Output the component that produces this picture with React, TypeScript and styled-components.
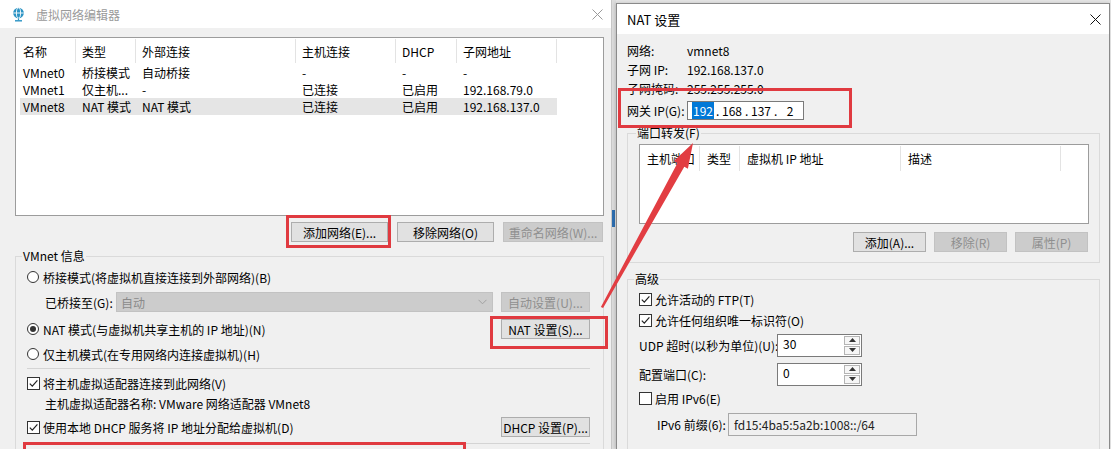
import React from 'react'
import styled, { createGlobalStyle } from 'styled-components'

const GlobalStyle = createGlobalStyle`
	html, body {
		margin: 0;
		padding: 0;
	}
	body {
		background: #e4e4e4;
		font-family: 'Noto Sans CJK SC', 'Microsoft YaHei', sans-serif;
		font-size: 12px;
		color: #000;
	}
`

const Stage = styled.div`
	position: relative;
	width: 1111px;
	height: 449px;
	overflow: hidden;
	display: flex;
	align-items: flex-start;
	background: #e4e4e4;
`

/* ---------- windows ---------- */

const EditorWindow = styled.section`
	box-sizing: border-box;
	width: 612px;
	height: 449px;
	flex: none;
	display: flex;
	flex-direction: column;
	background: #f0f0f0;
	border-right: 1px solid #c6c6c6;
`

const BackStrip = styled.div`
	width: 4px;
	height: 449px;
	flex: none;
	background: #dcdcdc;
	display: flex;
	flex-direction: column;
`

const BackMark = styled.div`
	margin-top: 210px;
	height: 17px;
	width: 3px;
	background: #2d6db0;
`

const NatWindow = styled.section`
	box-sizing: border-box;
	width: 494px;
	height: 446px;
	margin-top: 3px;
	flex: none;
	display: flex;
	flex-direction: column;
	background: #f0f0f0;
	border: 1px solid #8a8a8a;
	border-bottom: none;
	box-shadow: -1px 0 3px rgba(0, 0, 0, 0.15);
`

const TitleBar = styled.header<{ $h: number; $pl: number; $muted?: boolean }>`
	height: ${(p) => p.$h}px;
	flex: none;
	display: flex;
	align-items: center;
	gap: 11px;
	padding: 0 8px 0 ${(p) => p.$pl}px;
	background: #fff;
	color: ${(p) => (p.$muted ? '#9a9a9a' : '#000')};
	font-size: ${(p) => (p.$muted ? 12 : 13)}px;
`

const TitleText = styled.span`
	flex: 1;
	white-space: nowrap;
`

const EditorBody = styled.div`
	flex: 1;
	display: flex;
	flex-direction: column;
	padding: 9px 7px 0 15px;
`

const NatBody = styled.div`
	flex: 1;
	display: flex;
	flex-direction: column;
	padding: 7px 9px 0 10px;
`

/* ---------- list views ---------- */

const ListView = styled.div<{ $h: number; $mt?: number }>`
	box-sizing: border-box;
	height: ${(p) => p.$h}px;
	margin-top: ${(p) => p.$mt ?? 0}px;
	flex: none;
	background: #fff;
	border: 1px solid #9c9c9c;
	overflow: hidden;
`

const HeadRow = styled.div<{ $cols: string; $pl: number; $h: number }>`
	display: grid;
	grid-template-columns: ${(p) => p.$cols};
	padding-left: ${(p) => p.$pl}px;
	height: ${(p) => p.$h}px;
	margin-top: 1px;
	margin-bottom: 1px;
`

const HeadCell = styled.div<{ $pad: number }>`
	display: flex;
	align-items: center;
	padding-left: ${(p) => p.$pad}px;
	border-right: 1px solid #e3e3e3;
	white-space: nowrap;
	overflow: hidden;
`

const DataRow = styled.div<{ $selected?: boolean }>`
	display: grid;
	grid-template-columns: 56px 60px 160px 100px 61px 100px;
	margin-left: 4px;
	width: 537px;
	height: 17px;
	align-items: center;
	background: ${(p) => (p.$selected ? '#e5e5e5' : 'transparent')};
`

const DataCell = styled.div`
	padding-left: 6px;
	white-space: nowrap;
	overflow: hidden;
	&:first-child {
		padding-left: 3px;
	}
`

/* ---------- controls ---------- */

const ButtonBar = styled.div<{ $mt: number; $pr: number; $gap: number }>`
	display: flex;
	justify-content: flex-end;
	gap: ${(p) => p.$gap}px;
	margin-top: ${(p) => p.$mt}px;
	padding-right: ${(p) => p.$pr}px;
`

const PushButton = styled.button<{ $w: number }>`
	box-sizing: border-box;
	width: ${(p) => p.$w}px;
	height: 20px;
	flex: none;
	padding: 0;
	font-family: inherit;
	font-size: 12px;
	color: #000;
	background: #e1e1e1;
	border: 1px solid #adadad;
	border-radius: 0;
	white-space: nowrap;
	&:disabled {
		background: #cccccc;
		border-color: #c2c2c2;
		color: #8f8f8f;
	}
`

const Group = styled.fieldset<{ $h: number; $mt: number }>`
	box-sizing: border-box;
	margin: ${(p) => p.$mt}px 0 0 0;
	padding: 0;
	min-width: 0;
	height: ${(p) => p.$h}px;
	flex: none;
	border: 1px solid #dadada;
`

const GroupLabel = styled.legend<{ $indent: number }>`
	margin-left: ${(p) => p.$indent}px;
	padding: 0 1px;
	line-height: 14px;
	font-size: 12px;
`

const GroupContent = styled.div<{ $pl: number; $pr: number }>`
	display: flex;
	flex-direction: column;
	padding: 0 ${(p) => p.$pr}px 0 ${(p) => p.$pl}px;
`

const Row = styled.div<{ $h: number; $indent?: number; $mt?: number }>`
	height: ${(p) => p.$h}px;
	flex: none;
	display: flex;
	align-items: center;
	gap: 4px;
	margin-top: ${(p) => p.$mt ?? 0}px;
	padding-left: ${(p) => p.$indent ?? 0}px;
	white-space: nowrap;
`

const Spacer = styled.div`
	flex: 1;
`

const Separator = styled.div<{ $mt: number }>`
	height: 1px;
	margin-top: ${(p) => p.$mt}px;
	background: #d4d4d4;
	flex: none;
`

const Radio = styled.span<{ $on?: boolean }>`
	box-sizing: border-box;
	width: 12px;
	height: 12px;
	flex: none;
	border-radius: 50%;
	border: 1px solid #333;
	background: #fff;
	display: inline-flex;
	align-items: center;
	justify-content: center;
	&::after {
		content: '';
		width: 6px;
		height: 6px;
		border-radius: 50%;
		background: ${(p) => (p.$on ? '#333' : 'transparent')};
	}
`

const CheckBox = styled.span`
	box-sizing: border-box;
	width: 13px;
	height: 13px;
	flex: none;
	border: 1px solid #333;
	background: #fff;
	display: inline-flex;
	align-items: center;
	justify-content: center;
	margin-right: -1px;
`

const FieldLabel = styled.span<{ $w: number }>`
	width: ${(p) => p.$w}px;
	flex: none;
	white-space: nowrap;
`

const Dropdown = styled.div`
	box-sizing: border-box;
	flex: 1;
	height: 20px;
	margin-right: 4px;
	display: flex;
	align-items: center;
	padding: 0 5px 0 4px;
	background: #cccccc;
	border: 1px solid #c2c2c2;
	color: #8a8a8a;
`

const IpBox = styled.div`
	box-sizing: border-box;
	width: 117px;
	height: 19px;
	display: flex;
	align-items: center;
	padding-left: 2px;
	background: #fff;
	border: 1px solid #7a7a7a;
`

const Octet = styled.span`
	width: 26px;
	text-align: center;
	flex: none;
`

const Dot = styled.span`
	width: 3px;
	text-align: center;
	flex: none;
`

const Selection = styled.span`
	background: #0078d7;
	color: #fff;
	padding: 0 1px;
`

const Spin = styled.div`
	box-sizing: border-box;
	width: 85px;
	height: 23px;
	display: flex;
	background: #fff;
	border: 1px solid #7a7a7a;
`

const SpinValue = styled.div`
	flex: 1;
	padding: 1px 0 0 5px;
	line-height: 16px;
`

const SpinButtons = styled.div`
	width: 16px;
	display: flex;
	flex-direction: column;
	gap: 1px;
	padding: 1px 1px 1px 0;
`

const SpinButton = styled.div`
	flex: 1;
	display: flex;
	align-items: center;
	justify-content: center;
	background: #f6f6f6;
	border: 1px solid #b4b4b4;
`

const ReadOnlyBox = styled.div`
	box-sizing: border-box;
	width: 189px;
	height: 23px;
	display: flex;
	align-items: center;
	padding-left: 5px;
	background: #f0f0f0;
	border: 1px solid #a8a8a8;
	color: #222;
`

/* ---------- annotation overlays ---------- */

const RedFrame = styled.div<{ $x: number; $y: number; $w: number; $h: number }>`
	position: absolute;
	left: ${(p) => p.$x}px;
	top: ${(p) => p.$y}px;
	width: ${(p) => p.$w}px;
	height: ${(p) => p.$h}px;
	box-sizing: border-box;
	border: 3px solid #e03a40;
	pointer-events: none;
`

const ArrowLayer = styled.svg`
	position: absolute;
	left: 0;
	top: 0;
	pointer-events: none;
`

/* ---------- icons ---------- */

function Globe() {
	return (
		<svg width="13" height="15" viewBox="0 0 13 15">
			<circle cx="6.5" cy="6" r="5.3" fill="#2a93c4" />
			<ellipse cx="6.5" cy="6" rx="2.1" ry="5.1" fill="none" stroke="#fff" strokeWidth="0.9" />
			<line x1="1.3" y1="6" x2="11.7" y2="6" stroke="#fff" strokeWidth="0.9" />
			<line x1="6.5" y1="11.3" x2="6.5" y2="13.2" stroke="#2a93c4" strokeWidth="1.2" />
			<line x1="3" y1="13.8" x2="10" y2="13.8" stroke="#2a93c4" strokeWidth="1.4" />
		</svg>
	)
}

function CloseGlyph({ color }: { color: string }) {
	return (
		<svg width="11" height="11" viewBox="0 0 11 11">
			<path d="M0.5 0.5 L10.5 10.5 M10.5 0.5 L0.5 10.5" stroke={color} strokeWidth="1" />
		</svg>
	)
}

function Check() {
	return (
		<svg width="11" height="11" viewBox="0 0 11 11">
			<path d="M1.8 5.6 L4.3 8.2 L9.4 2.4" fill="none" stroke="#222" strokeWidth="1.2" />
		</svg>
	)
}

function Chevron() {
	return (
		<svg width="9" height="6" viewBox="0 0 9 6">
			<path d="M0.5 0.8 L4.5 4.8 L8.5 0.8" fill="none" stroke="#a0a0a0" strokeWidth="1" />
		</svg>
	)
}

function Triangle({ up }: { up?: boolean }) {
	return (
		<svg width="7" height="4" viewBox="0 0 7 4">
			<path d={up ? 'M0 4 L3.5 0 L7 4 Z' : 'M0 0 L3.5 4 L7 0 Z'} fill="#333" />
		</svg>
	)
}

/* ---------- data ---------- */

const networks = [
	{ name: 'VMnet0', type: '桥接模式', ext: '自动桥接', host: '-', dhcp: '-', subnet: '-' },
	{ name: 'VMnet1', type: '仅主机...', ext: '-', host: '已连接', dhcp: '已启用', subnet: '192.168.79.0' },
	{ name: 'VMnet8', type: 'NAT 模式', ext: 'NAT 模式', host: '已连接', dhcp: '已启用', subnet: '192.168.137.0', selected: true },
]

const editorColumns = ['名称', '类型', '外部连接', '主机连接', 'DHCP', '子网地址']
const forwardColumns = ['主机端口', '类型', '虚拟机 IP 地址', '描述']

function Spinner({ value }: { value: string }) {
	return (
		<Spin>
			<SpinValue>{value}</SpinValue>
			<SpinButtons>
				<SpinButton>
					<Triangle up />
				</SpinButton>
				<SpinButton>
					<Triangle />
				</SpinButton>
			</SpinButtons>
		</Spin>
	)
}

function Checked({ children }: { children: React.ReactNode }) {
	return (
		<>
			<CheckBox>
				<Check />
			</CheckBox>
			<span>{children}</span>
		</>
	)
}

function NetworkEditor() {
	return (
		<EditorWindow>
			<TitleBar $h={28} $pl={12} $muted>
				<Globe />
				<TitleText>虚拟网络编辑器</TitleText>
				<CloseGlyph color="#9a9a9a" />
			</TitleBar>
			<EditorBody>
				<ListView $h={179}>
					<HeadRow $cols="56px 60px 160px 100px 61px 100px" $pl={4} $h={24}>
						{editorColumns.map((c, i) => (
							<HeadCell key={c} $pad={i === 0 ? 3 : 6}>
								{c}
							</HeadCell>
						))}
					</HeadRow>
					{networks.map((n) => (
						<DataRow key={n.name} $selected={n.selected}>
							<DataCell>{n.name}</DataCell>
							<DataCell>{n.type}</DataCell>
							<DataCell>{n.ext}</DataCell>
							<DataCell>{n.host}</DataCell>
							<DataCell>{n.dhcp}</DataCell>
							<DataCell>{n.subnet}</DataCell>
						</DataRow>
					))}
				</ListView>

				<ButtonBar $mt={6} $pr={1} $gap={9}>
					<PushButton $w={97}>添加网络(E)...</PushButton>
					<PushButton $w={97}>移除网络(O)</PushButton>
					<PushButton $w={100} disabled>
						重命名网络(W)...
					</PushButton>
				</ButtonBar>

				<Group $h={230} $mt={7}>
					<GroupLabel $indent={6}>VMnet 信息</GroupLabel>
					<GroupContent $pl={11} $pr={13}>
						<Row $h={24} $mt={2}>
							<Radio />
							<span>桥接模式(将虚拟机直接连接到外部网络)(B)</span>
						</Row>
						<Row $h={26} $indent={18}>
							<FieldLabel $w={67}>已桥接至(G):</FieldLabel>
							<Dropdown>
								<Spacer>自动</Spacer>
								<Chevron />
							</Dropdown>
							<PushButton $w={89} disabled>
								自动设置(U)...
							</PushButton>
						</Row>
						<Row $h={28}>
							<Radio $on />
							<span>NAT 模式(与虚拟机共享主机的 IP 地址)(N)</span>
							<Spacer />
							<PushButton $w={89}>NAT 设置(S)...</PushButton>
						</Row>
						<Row $h={22}>
							<Radio />
							<span>仅主机模式(在专用网络内连接虚拟机)(H)</span>
						</Row>
						<Separator $mt={3} />
						<Row $h={20} $mt={4}>
							<Checked>将主机虚拟适配器连接到此网络(V)</Checked>
						</Row>
						<Row $h={20} $indent={18}>
							主机虚拟适配器名称: VMware 网络适配器 VMnet8
						</Row>
						<Row $h={28}>
							<Checked>使用本地 DHCP 服务将 IP 地址分配给虚拟机(D)</Checked>
							<Spacer />
							<PushButton $w={89}>DHCP 设置(P)...</PushButton>
						</Row>
						<Separator $mt={2} />
					</GroupContent>
				</Group>
			</EditorBody>
		</EditorWindow>
	)
}

function NatSettings() {
	return (
		<NatWindow>
			<TitleBar $h={30} $pl={10}>
				<TitleText>NAT 设置</TitleText>
				<CloseGlyph color="#111" />
			</TitleBar>
			<NatBody>
				<Row $h={19}>
					<FieldLabel $w={56}>网络:</FieldLabel>
					vmnet8
				</Row>
				<Row $h={19}>
					<FieldLabel $w={56}>子网 IP:</FieldLabel>
					192.168.137.0
				</Row>
				<Row $h={19}>
					<FieldLabel $w={56}>子网掩码:</FieldLabel>
					255.255.255.0
				</Row>
				<Row $h={22} $mt={1}>
					<FieldLabel $w={56}>网关 IP(G):</FieldLabel>
					<IpBox>
						<Octet>
							<Selection>192</Selection>
						</Octet>
						<Dot>.</Dot>
						<Octet>168</Octet>
						<Dot>.</Dot>
						<Octet>137</Octet>
						<Dot>.</Dot>
						<Octet>2</Octet>
					</IpBox>
				</Row>

				<Group $h={137} $mt={5}>
					<GroupLabel $indent={8}>端口转发(F)</GroupLabel>
					<GroupContent $pl={11} $pr={10}>
						<ListView $h={80} $mt={4}>
							<HeadRow $cols="60px 40px 161px 160px" $pl={0} $h={25}>
								{forwardColumns.map((c) => (
									<HeadCell key={c} $pad={7}>
										{c}
									</HeadCell>
								))}
							</HeadRow>
						</ListView>
					</GroupContent>
					<ButtonBar $mt={8} $pr={11} $gap={8}>
						<PushButton $w={73}>添加(A)...</PushButton>
						<PushButton $w={73} disabled>
							移除(R)
						</PushButton>
						<PushButton $w={73} disabled>
							属性(P)
						</PushButton>
					</ButtonBar>
				</Group>

				<Group $h={200} $mt={9}>
					<GroupLabel $indent={6}>高级</GroupLabel>
					<GroupContent $pl={11} $pr={10}>
						<Row $h={20} $mt={3}>
							<Checked>允许活动的 FTP(T)</Checked>
						</Row>
						<Row $h={22}>
							<Checked>允许任何组织唯一标识符(O)</Checked>
						</Row>
						<Row $h={28}>
							<FieldLabel $w={134}>UDP 超时(以秒为单位)(U):</FieldLabel>
							<Spinner value="30" />
						</Row>
						<Row $h={30}>
							<FieldLabel $w={134}>配置端口(C):</FieldLabel>
							<Spinner value="0" />
						</Row>
						<Row $h={18}>
							<CheckBox />
							<span>启用 IPv6(E)</span>
						</Row>
						<Row $h={34} $indent={18}>
							<FieldLabel $w={67}>IPv6 前缀(6):</FieldLabel>
							<ReadOnlyBox>fd15:4ba5:5a2b:1008::/64</ReadOnlyBox>
						</Row>
					</GroupContent>
				</Group>
			</NatBody>
		</NatWindow>
	)
}

export default function App() {
	return (
		<>
			<GlobalStyle />
			<Stage>
				<NetworkEditor />
				<BackStrip>
					<BackMark />
				</BackStrip>
				<NatSettings />

				<RedFrame $x={286} $y={215} $w={105} $h={33} />
				<RedFrame $x={490} $y={316} $w={118} $h={33} />
				<RedFrame $x={23} $y={442} $w={443} $h={30} />
				<RedFrame $x={618} $y={88} $w={234} $h={40} />

				<ArrowLayer width="1111" height="449" viewBox="0 0 1111 449">
					<polygon
						points="600.9,306.9 677.5,163.0 673.9,161.0 693,143 687.9,168.8 684.3,166.7 603.1,308.1"
						fill="#e23d42"
					/>
				</ArrowLayer>
			</Stage>
		</>
	)
}
